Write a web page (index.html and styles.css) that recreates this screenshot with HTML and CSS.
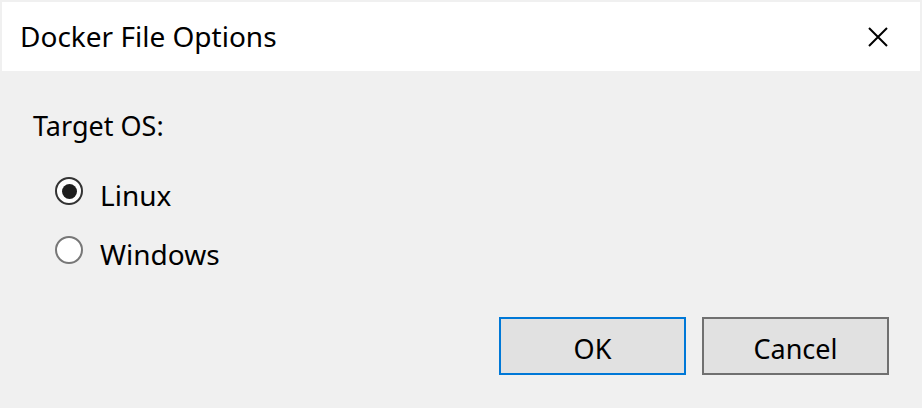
FILE: index.html
```html
<!DOCTYPE html>
<html>
<head>
<meta charset="utf-8">
<link rel="stylesheet" href="styles.css">
</head>
<body>
<div class="window">
  <div class="titlebar">
    <span class="title">Docker File Options</span>
    <span class="close">
      <svg width="20" height="20" viewBox="0 0 20 20"><path d="M1 1 L19 19 M19 1 L1 19" stroke="#000" stroke-width="2" fill="none"/></svg>
    </span>
  </div>
  <div class="content">
    <div class="label">Target OS:</div>
    <div class="radios">
      <div class="radio"><span class="circle checked"><span class="dot"></span></span><span class="rtext">Linux</span></div>
      <div class="radio"><span class="circle"></span><span class="rtext">Windows</span></div>
    </div>
    <div class="buttons">
      <div class="btn default">OK</div>
      <div class="btn">Cancel</div>
    </div>
  </div>
</div>
</body>
</html>
```
FILE: styles.css
```css
html, body {
  margin: 0;
  padding: 0;
  background: #f0f0f0;
}
body {
  font-family: "Noto Sans", "Open Sans", sans-serif;
  color: #000;
}
.window {
  width: 922px;
  height: 408px;
  padding: 2px;
  box-sizing: border-box;
  display: flex;
  flex-direction: column;
}
.titlebar {
  height: 69px;
  background: #fff;
  display: flex;
  align-items: center;
  justify-content: space-between;
  padding-left: 18px;
  padding-right: 32px;
  flex: none;
}
.title {
  font-size: 28px;
  line-height: 1;
  margin-top: -2px;
}
.close {
  display: flex;
  width: 20px;
  height: 20px;
}
.content {
  flex: 1;
  padding: 0 31px 0 31px;
  display: flex;
  flex-direction: column;
}
.label {
  font-size: 27px;
  margin-top: 40px;
  line-height: 30px;
}
.radios {
  margin-top: 36px;
  padding-left: 22px;
  display: flex;
  flex-direction: column;
  gap: 23px;
}
.radio {
  display: flex;
  align-items: center;
  height: 36px;
}
.circle {
  width: 28px;
  height: 28px;
  margin-bottom: 8px;
  box-sizing: border-box;
  border: 2px solid #777;
  border-radius: 50%;
  background: #fff;
  display: flex;
  align-items: center;
  justify-content: center;
  flex: none;
}
.circle.checked {
  border-color: #333;
}
.dot {
  width: 15px;
  height: 15px;
  border-radius: 50%;
  background: #1f1f1f;
}
.rtext {
  font-size: 28px;
  margin-left: 17px;
}
.buttons {
  margin-top: auto;
  margin-bottom: 31px;
  display: flex;
  justify-content: flex-end;
  gap: 16px;
}
.btn {
  width: 187px;
  height: 58px;
  padding-top: 5px;
  box-sizing: border-box;
  background: #e1e1e1;
  border: 2px solid #707070;
  display: flex;
  align-items: center;
  justify-content: center;
  font-size: 27px;
}
.btn.default {
  border-color: #0078d7;
}
```
